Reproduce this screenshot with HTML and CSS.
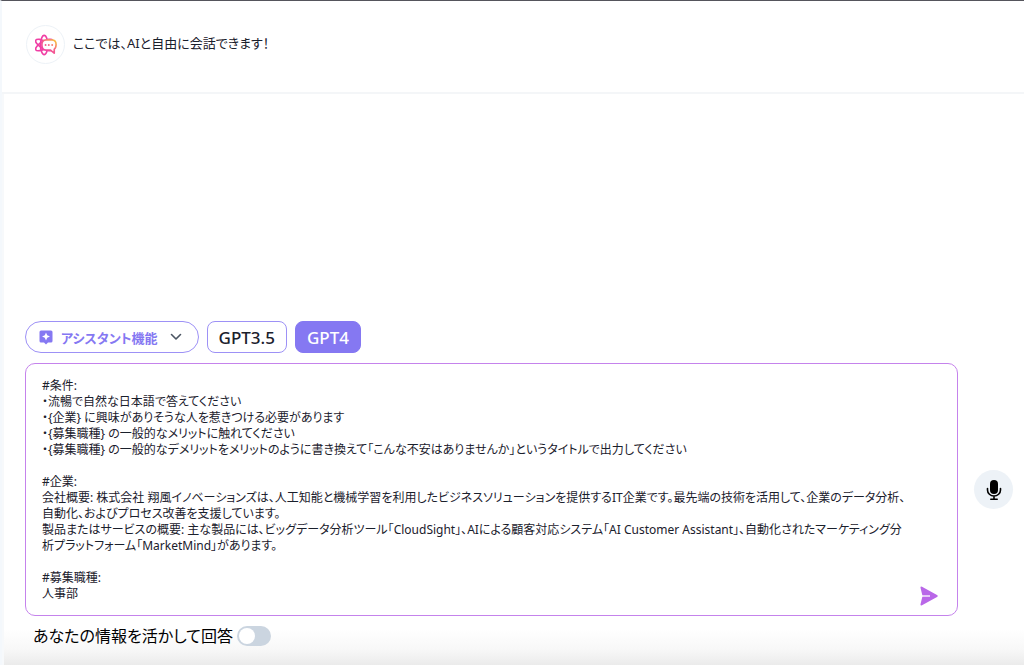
FILE: index.html
```html
<!DOCTYPE html>
<html lang="ja">
<head>
<meta charset="utf-8">
<meta name="viewport" content="width=device-width, initial-scale=1">
<title>AIチャット</title>
<link rel="stylesheet" href="styles.css">
</head>
<body>
<div class="app">
  <header class="intro">
    <span class="avatar">
      <svg viewBox="0 0 24 24" width="22" height="22" fill="none" stroke="url(#warm)" stroke-width="1.8" stroke-linecap="round" stroke-linejoin="round" aria-hidden="true">
        <defs>
          <linearGradient id="warm" gradientUnits="userSpaceOnUse" x1="10" y1="19" x2="20" y2="6">
            <stop offset="0" stop-color="#f03fa5"/>
            <stop offset="0.5" stop-color="#f4608a"/>
            <stop offset="1" stop-color="#f8bd42"/>
          </linearGradient>
        </defs>
        <g stroke="#f03fa5">
          <ellipse cx="10" cy="12" rx="4" ry="10.500"/>
          <ellipse cx="10" cy="12" rx="4" ry="10.500" transform="rotate(60 10 12)"/>
          <ellipse cx="10" cy="12" rx="4" ry="10.500" transform="rotate(-60 10 12)"/>
        </g>
        <path fill="#fff" d="M12 6.500H18.500C21.500 6.500 23 8.500 23 11.500C23 14 22.300 15.800 21 16.500V21L17 17.500H12C9 17.500 7.500 15 7.500 12C7.500 9 9 6.500 12 6.500Z"/>
        <path d="M11.500 12h.1M15 12h.1M18.700 12h.1" stroke-width="2"/>
      </svg>
    </span>
    <p class="intro-text">ここでは、AIと自由に会話できます！</p>
  </header>
  <main class="chat">
    <section class="messages" aria-label="会話"></section>
    <form class="composer">
      <div class="tools">
        <button class="tool assist" type="button">
          <svg viewBox="0 0 14 15" width="14" height="15" aria-hidden="true">
            <path fill="#8578f2" d="M2 0.500H12Q13.500 0.500 13.500 2V11Q13.500 12.500 12 12.500H9L7 14.500L5 12.500H2Q0.500 12.500 0.500 11V2Q0.500 0.500 2 0.500Z"/>
            <path fill="#fff" d="M7 2.500L8.200 5.300L11 6.500L8.200 7.700L7 10.500L5.800 7.700L3 6.500L5.800 5.300Z"/>
          </svg>
          <span>アシスタント機能</span>
          <svg class="chevron" viewBox="0 0 12 8" width="12" height="8" fill="none" stroke="#4b5563" stroke-width="1.6" stroke-linecap="round" stroke-linejoin="round" aria-hidden="true"><path d="M1.500 1.500L6 6L10.500 1.500"/></svg>
        </button>
        <button class="tool model" type="button">GPT3.5</button>
        <button class="tool model selected" type="button" aria-pressed="true">GPT4</button>
      </div>
      <div class="entry">
        <div class="prompt-box">
          <textarea class="prompt" rows="14" aria-label="メッセージ" spellcheck="false">#条件:
・流暢で自然な日本語で答えてください
・{企業} に興味がありそうな人を惹きつける必要があります
・{募集職種} の一般的なメリットに触れてください
・{募集職種} の一般的なデメリットをメリットのように書き換えて「こんな不安はありませんか」というタイトルで出力してください

#企業:
会社概要: 株式会社 翔風イノベーションズは、人工知能と機械学習を利用したビジネスソリューションを提供するIT企業です。最先端の技術を活用して、企業のデータ分析、自動化、およびプロセス改善を支援しています。
製品またはサービスの概要: 主な製品には、ビッグデータ分析ツール「CloudSight」、AIによる顧客対応システム「AI Customer Assistant」、自動化されたマーケティング分析プラットフォーム「MarketMind」があります。

#募集職種:
人事部</textarea>
          <button class="send" type="submit" aria-label="送信">
            <svg viewBox="0 0 18 20" width="18" height="20" aria-hidden="true">
              <path fill="#b967e8" d="M0.500 1.800Q0.300 0 2 0.800L17 9Q18.500 10 17 11L2 19.200Q0.300 20 0.500 18.200L2.500 10Z"/>
              <path stroke="#fff" stroke-width="1.300" d="M2 10H10"/>
            </svg>
          </button>
        </div>
        <button class="mic" type="button" aria-label="音声入力">
          <svg viewBox="0 0 16 20" width="16" height="20" aria-hidden="true">
            <rect x="4" y="0" width="8" height="14" rx="4"/>
            <path fill="none" stroke="#000" stroke-width="1.600" stroke-linecap="round" d="M1.500 8.500V10A6.500 6 0 0 0 14.500 10V8.500M8 16V19M4.800 19.200H11.200"/>
          </svg>
        </button>
      </div>
      <label class="personal">
        <span>あなたの情報を活かして回答</span>
        <input class="switch" type="checkbox" role="switch">
      </label>
    </form>
  </main>
</div>
</body>
</html>
```

FILE: styles.css
```css
* {
  box-sizing: border-box;
}

body {
  margin: 0;
  color: #1a202c;
  background: #fff;
  font-family: "Noto Sans", "Noto Sans CJK JP", sans-serif;
  font-feature-settings: "palt";
}

button,
textarea {
  font: inherit;
  font-feature-settings: inherit;
  color: inherit;
}

button {
  padding: 0;
  border: 0;
  background: none;
  cursor: pointer;
}

svg {
  display: block;
}

.app {
  display: flex;
  flex-direction: column;
  min-height: 100vh;
  border-top: 1px solid #55555c;
  border-left: 2px solid #f4f8fc;
  background: linear-gradient(to top, #ebebeb, #f8f8f8 16px, #fff 36px);
}

.intro {
  display: flex;
  align-items: center;
  gap: 8px;
  padding: 24px 24px 28px;
  border-bottom: 2px solid #f4f6f8;
}

.avatar {
  display: grid;
  place-items: center;
  width: 39px;
  height: 39px;
  border: 1px solid #edf2f7;
  border-radius: 50%;
}

.intro-text {
  margin: 0;
  padding-bottom: 4px;
  font-size: 13px;
  line-height: 20px;
}

.chat {
  display: flex;
  flex: 1;
  flex-direction: column;
  border-left: 2px solid #f7f9fb;
}

.messages {
  flex: 1;
}

.composer {
  padding: 0 11px 19px 21px;
}

.tools {
  display: flex;
  gap: 8px;
  margin-bottom: 10px;
}

.tool {
  height: 32px;
  border: 1px solid #9d91f6;
  border-radius: 8px;
  font-weight: 500;
}

.assist {
  display: flex;
  align-items: center;
  gap: 8px;
  padding: 0 16px 0 13px;
  border-radius: 16px;
  color: #8578f2;
  font-size: 13px;
  font-weight: 700;
}

.chevron {
  margin-left: 4px;
}

.model {
  padding: 0 11px;
  font-size: 17px;
}

.selected {
  border-color: #8578f2;
  color: #fff;
  background: #8578f2;
}

.entry {
  display: flex;
  align-items: center;
  gap: 16px;
}

.prompt-box {
  position: relative;
  flex: 1;
}

.prompt {
  display: block;
  width: 100%;
  padding: 14px 46px 13px 16px;
  border: 1px solid #c583ec;
  border-radius: 10px;
  outline: 0;
  resize: none;
  overflow: hidden;
  background: #fff;
  font-size: 12px;
  line-height: 16px;
}

.send {
  position: absolute;
  right: 20px;
  bottom: 10px;
}

.mic {
  display: grid;
  place-items: center;
  width: 39px;
  height: 39px;
  border-radius: 50%;
  background: #edf2f7;
}

.personal {
  display: flex;
  align-items: center;
  gap: 4px;
  width: fit-content;
  margin: 10px 0 0 8px;
  color: #000;
  font-size: 16px;
  line-height: 20px;
}

.switch {
  appearance: none;
  display: flex;
  width: 34px;
  height: 20px;
  margin: 0;
  padding: 2px;
  border-radius: 10px;
  background: #cbd5e0;
  cursor: pointer;
}

.switch::before {
  content: "";
  width: 16px;
  height: 16px;
  border-radius: 50%;
  background: #fff;
}

.switch:checked {
  justify-content: flex-end;
  background: #8578f2;
}
```
